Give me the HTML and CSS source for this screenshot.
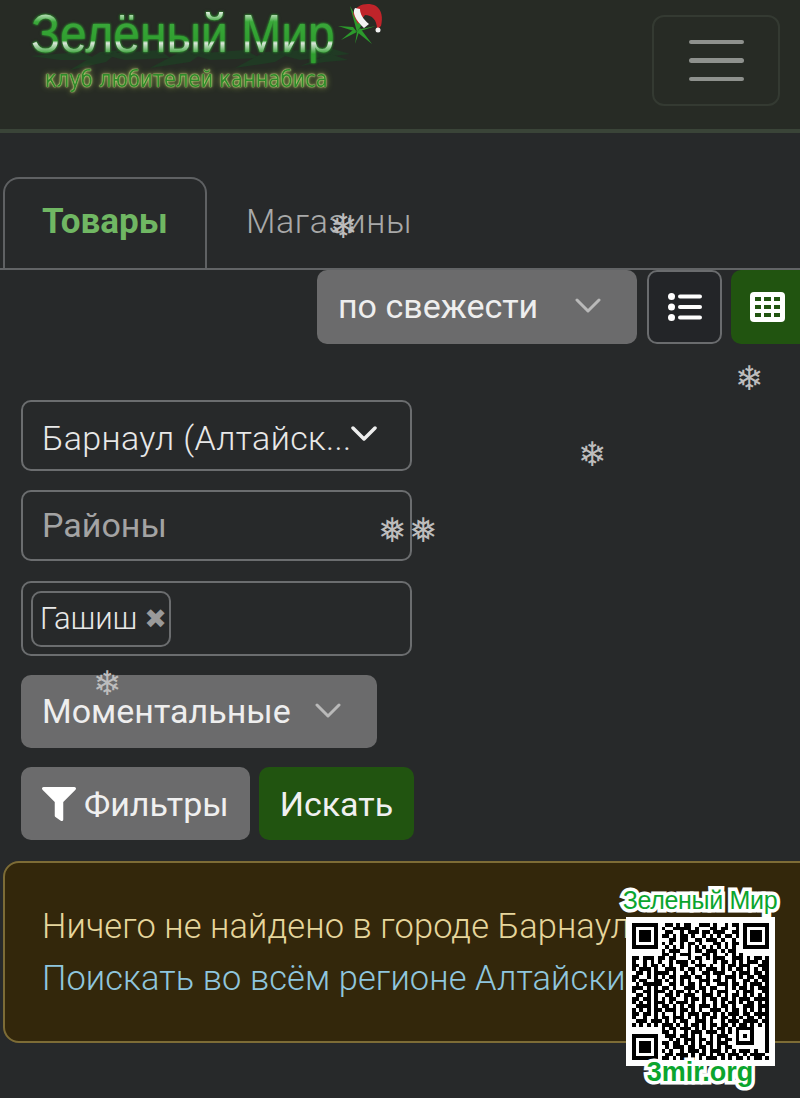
FILE: index.html
```html
<!DOCTYPE html>
<html lang="ru">
<head>
    <meta charset="UTF-8">
    <meta name="viewport" content="width=device-width, initial-scale=1.0">
    <title>Зелёный Мир</title>
    <link rel="stylesheet" href="styles.css">
</head>
<body>
    <header class="navbar">
        <a class="brand">
            <svg class="brand-foliage" viewBox="0 0 320 26">
                <g fill="#203a24">
                    <path d="M0 10 L50 6 L70 14 L30 14Z"/>
                    <path d="M40 24 L70 6 L90 4 L76 16Z"/>
                    <path d="M70 8 L130 4 L140 12 L95 14Z"/>
                    <path d="M120 22 L150 6 L180 2 L160 16Z"/>
                    <path d="M160 8 L215 4 L230 12 L180 14Z"/>
                    <path d="M205 22 L235 6 L265 4 L245 16Z"/>
                    <path d="M240 6 L300 2 L320 8 L270 14Z"/>
                    <path d="M270 20 L300 8 L318 14 L295 16Z"/>
                </g>
            </svg>
            <span class="brand-title">Зелёный Мир</span>
            <span class="brand-sub">клуб любителей каннабиса</span>
            <svg class="brand-leaf" viewBox="0 0 46 46">
                <g fill="#2c9a2c">
                    <path d="M19 30 L12 4 L23 24Z"/>
                    <path d="M19 30 L0 24 L15 25Z"/>
                    <path d="M19 30 L34 42 L22 26Z"/>
                    <path d="M19 30 L17 42 L21 30Z"/>
                    <path d="M19 30 L38 24 L23 27Z"/>
                    <path d="M19 30 L3 38 L15 28Z"/>
                </g>
                <path fill="#c0242a" d="M15 12 C18 2 30 0 38 4 C44 8 45 16 43 24 L39 27 C39 18 34 13 27 13 L20 22Z"/>
                <path fill="#f2f2f2" d="M17 6 C14 10 17 18 26 26 L31 22 C25 17 22 12 22 7Z"/>
                <circle cx="40" cy="28" r="2.5" fill="#f2f2f2"/>
            </svg>
        </a>
        <button class="navbar-toggler">
            <span></span><span></span><span></span>
        </button>
    </header>

    <ul class="tabs">
        <li class="tab active">Товары</li>
        <li class="tab">Магазины</li>
    </ul>

    <div class="sort-bar">
        <div class="select select-grey sort-select">
            <span>по свежести</span>
            <svg class="chevron" viewBox="0 0 26 16"><polyline points="2,2 13,13 24,2"/></svg>
        </div>
        <button class="view-btn">
            <svg viewBox="0 0 34 28" width="34" height="28">
                <g fill="#fff">
                    <circle cx="3.5" cy="3.5" r="3.5"/>
                    <circle cx="3.5" cy="14" r="3.5"/>
                    <circle cx="3.5" cy="24.5" r="3.5"/>
                    <rect x="10" y="1.5" width="24" height="4" rx="2"/>
                    <rect x="10" y="12" width="24" height="4" rx="2"/>
                    <rect x="10" y="22.5" width="24" height="4" rx="2"/>
                </g>
            </svg>
        </button>
        <button class="view-btn view-btn-active">
            <svg viewBox="0 0 35 30" width="35" height="30">
                <rect width="35" height="30" rx="4" fill="#fff"/>
                <g fill="#215410">
                    <rect x="5" y="5" width="6" height="4"/><rect x="14" y="5" width="7" height="4"/><rect x="24" y="5" width="6" height="4"/>
                    <rect x="5" y="13" width="6" height="4"/><rect x="14" y="13" width="7" height="4"/><rect x="24" y="13" width="6" height="4"/>
                    <rect x="5" y="21" width="6" height="4"/><rect x="14" y="21" width="7" height="4"/><rect x="24" y="21" width="6" height="4"/>
                </g>
            </svg>
        </button>
    </div>

    <form class="filters">
        <div class="field city-field">
            <span class="city-name">Барнаул (Алтайск...</span>
            <svg class="chevron chevron-light" viewBox="0 0 26 16"><polyline points="2,2 13,13 24,2"/></svg>
        </div>
        <div class="field placeholder">Районы</div>
        <div class="field tags-field">
            <span class="tag">Гашиш <b class="tag-x">✖</b></span>
        </div>
        <div class="select select-grey type-select">
            <span>Моментальные</span>
            <svg class="chevron" viewBox="0 0 26 16"><polyline points="2,2 13,13 24,2"/></svg>
        </div>
        <div class="actions">
            <button type="button" class="btn btn-grey">
                <svg viewBox="0 0 512 512" width="34" height="34"><path fill="#fff" d="M487.976 0H24.028C2.71 0-8.047 25.866 7.058 40.971L192 225.941V432c0 7.831 3.821 15.17 10.237 19.662l80 55.98C298.02 518.69 320 507.493 320 487.98V225.941l184.947-184.97C520.021 25.896 509.338 0 487.976 0z"/></svg>
                Фильтры
            </button>
            <button type="button" class="btn btn-green">Искать</button>
        </div>
    </form>

    <div class="alert">
        <div>Ничего не найдено в городе Барнаул</div>
        <a class="alert-link">Поискать во всём регионе Алтайский край</a>
    </div>

    <!-- снежинки -->
    <span class="snow" style="left:323px;top:206px">❄</span>
    <span class="snow" style="left:729px;top:358px">❄</span>
    <span class="snow" style="left:572px;top:434px">❄</span>
    <span class="snow" style="left:372px;top:510px">❅</span>
    <span class="snow" style="left:403px;top:510px">❅</span>
    <span class="snow" style="left:87px;top:663px">❄</span>

    <aside class="qr-widget">
        <div class="qr-title">Зеленый Мир</div>
        <div class="qr-box"><svg id="qr" viewBox="0 0 37 37" shape-rendering="crispEdges"></svg></div>
        <div class="qr-url">3mir.org</div>
    </aside>

    <script src="qr.js"></script>
</body>
</html>
```

FILE: styles.css
```css
html, body {
    margin: 0;
    height: 1098px;
    overflow: hidden;
}
body {
    position: relative;
    font-family: Roboto, 'Liberation Sans', sans-serif;
    font-size: 34px;
    font-weight: 300;
    color: #e8e8e8;
    background-color: #27292a;
}
button {
    font: inherit;
    color: inherit;
}

/* шапка */
.navbar {
    display: flex;
    justify-content: space-between;
    height: 129px;
    box-sizing: content-box;
    background-color: #272b25;
    border-bottom: 4px solid #3a4438;
}
.brand {
    position: relative;
    display: block;
    width: 400px;
}
.brand-foliage {
    position: absolute;
    left: 30px;
    top: 46px;
    width: 320px;
    height: 26px;
}
.brand-title {
    position: absolute;
    left: 31px;
    top: 2px;
    font-family: 'Liberation Sans', sans-serif;
    font-size: 54px;
    font-weight: 400;
    line-height: 62px;
    white-space: nowrap;
    color: transparent;
    background: linear-gradient(#e4efe4 16%, #3aa83a 32%, #2f9f2f 62%, #dfe8df 66%, #2f9f2f 84%);
    -webkit-background-clip: text;
    background-clip: text;
    filter: drop-shadow(0 0 1px #3aa83a) drop-shadow(0 0 1px #1f5a1f);
    transform: scaleX(0.89);
    transform-origin: left center;
}
.brand-sub {
    position: absolute;
    left: 45px;
    top: 66px;
    font-family: 'DejaVu Sans', sans-serif;
    font-size: 19.5px;
    font-weight: 400;
    line-height: 28px;
    white-space: nowrap;
    color: #2f8a2a;
    text-shadow: 0 0 1px #e6f09a, 0 0 2px #dbe88a, 0 0 6px #a8c050;
    transform: scaleY(1.2);
}
.brand-leaf {
    position: absolute;
    left: 338px;
    top: 2px;
    width: 46px;
    height: 46px;
}
.navbar-toggler {
    display: flex;
    flex-direction: column;
    justify-content: center;
    align-items: center;
    gap: 14px;
    width: 128px;
    height: 91px;
    margin: 15px 20px 0 0;
    padding: 0;
    background: none;
    border: 2px solid #343a32;
    border-radius: 12px;
}
.navbar-toggler span {
    display: block;
    width: 55px;
    height: 4.5px;
    border-radius: 3px;
    background-color: #8e918d;
}

/* вкладки */
.tabs {
    display: flex;
    margin: 44px 0 0;
    padding: 0 0 0 3px;
    list-style: none;
    border-bottom: 2px solid #626466;
}
.tab {
    display: flex;
    align-items: center;
    height: 91px;
    padding: 0 39px 4px;
    box-sizing: border-box;
    color: #a9a9a9;
    letter-spacing: 0.6px;
}
.tab.active {
    width: 204px;
    padding: 0 0 4px 37px;
    font-weight: 700;
    font-size: 35px;
    letter-spacing: 0;
    color: #70b763;
    border: 2px solid #5f6163;
    border-bottom: none;
    border-radius: 16px 16px 0 0;
}

/* сортировка */
.sort-bar {
    display: flex;
    gap: 10px;
    height: 74px;
    margin-left: 317px;
}
.select {
    display: flex;
    align-items: center;
    justify-content: space-between;
    box-sizing: border-box;
    height: 74px;
    padding-bottom: 2px;
    border-radius: 10px;
}
.select-grey {
    background-color: #6b6b6c;
    font-weight: 400;
    color: #eeeeee;
}
.sort-select {
    width: 320px;
    padding: 0 36px 2px 21px;
    flex-shrink: 0;
}
.type-select {
    width: 356px;
    height: 73px;
    padding: 0 36px 2px 21px;
    margin-bottom: 19px;
}
.chevron {
    width: 26px;
    height: 16px;
    fill: none;
    stroke: #b9b9b9;
    stroke-width: 3;
    stroke-linecap: round;
    stroke-linejoin: round;
    flex-shrink: 0;
}
.chevron-light {
    stroke: #eeeeee;
    stroke-width: 3.5;
    margin-top: -8px;
}
.view-btn {
    display: flex;
    align-items: center;
    justify-content: center;
    flex-shrink: 0;
    width: 75px;
    padding: 0;
    background-color: #232528;
    border: 2px solid #6a6c6e;
    border-radius: 10px;
}
.view-btn-active {
    width: 90px;
    margin-left: -1px;
    padding-right: 17px;
    background-color: #215410;
    border: none;
}

/* фильтры */
.filters {
    margin: 56px 0 0 21px;
}
.field {
    box-sizing: border-box;
    display: flex;
    align-items: center;
    width: 391px;
    height: 71px;
    margin-bottom: 19px;
    padding: 0 19px;
    border: 2px solid #6b6d6f;
    border-radius: 10px;
}
.city-field {
    justify-content: space-between;
    padding: 5px 34px 0 19px;
}
.city-name {
    white-space: nowrap;
    letter-spacing: 0.35px;
}
.placeholder {
    color: #a3a3a3;
    font-weight: 400;
    padding-bottom: 2px;
    margin-bottom: 20px;
}
.tags-field {
    height: 75px;
    padding: 0 8px;
}
.tag {
    display: flex;
    align-items: center;
    gap: 7px;
    box-sizing: border-box;
    height: 56px;
    padding: 0 0 0 7px;
    width: 140px;
    font-size: 31px;
    border: 2px solid #6b6d6f;
    border-radius: 10px;
}
.tag-x {
    font-family: 'DejaVu Sans', sans-serif;
    font-size: 27px;
    line-height: 1;
    color: #9a9a9a;
}
.actions {
    display: flex;
    gap: 9px;
}
.btn {
    display: flex;
    align-items: center;
    gap: 8px;
    height: 73px;
    border: none;
    border-radius: 10px;
    font-weight: 400;
    padding: 0 21px;
}
.btn-grey {
    background-color: #6b6b6c;
    color: #f0f0f0;
}
.btn-green {
    background-color: #215410;
    color: #f0f0f0;
}

/* сообщение */
.alert {
    box-sizing: border-box;
    width: 900px;
    height: 182px;
    margin: 21px 0 0 3px;
    padding: 37px 37px;
    font-size: 34.4px;
    letter-spacing: 0.1px;
    line-height: 52px;
    white-space: nowrap;
    color: #e6d69c;
    background-color: #33270b;
    border: 2px solid #7d6c36;
    border-radius: 16px;
}
.alert-link {
    color: #8fc6de;
}

.snow {
    position: absolute;
    width: 40px;
    text-align: center;
    font-family: 'DejaVu Sans', sans-serif;
    font-size: 34px;
    line-height: 40px;
    color: #bdbdbd;
}

/* QR поверх страницы */
.qr-widget {
    position: absolute;
    left: 622px;
    top: 884px;
    width: 156px;
    text-align: center;
    font-family: 'Liberation Sans', sans-serif;
    font-weight: 400;
}
.qr-title, .qr-url {
    position: relative;
    z-index: 1;
    white-space: nowrap;
    color: #0ba52e;
    -webkit-text-stroke: 7px #ffffff;
    paint-order: stroke fill;
}
.qr-title {
    font-size: 25px;
    letter-spacing: -0.3px;
    line-height: 33px;
}
.qr-box {
    box-sizing: border-box;
    width: 149px;
    height: 149px;
    margin-left: 4px;
    padding: 6px;
    background-color: #fff;
}
.qr-box svg {
    display: block;
    width: 137px;
    height: 137px;
}
.qr-url {
    margin-top: -10px;
    font-size: 27px;
    font-weight: 700;
    line-height: 32px;
}
```

FILE: qr.js
```js
// строки QR-кода, # - чёрный модуль
const rows = [
    '.......#.##.#.##..###.#..#.##.#.......',
    '.......##..#####.#...##.##..#.#.......',
    '.......#.##..#.###.##.###..##..',
    '.......###.#.##.#..#.#.#.##.##.',
    '.......#..##.##..##.###.#..#.#.',
    '.......##.#..#.##.#...##.#.###.',
    '.......#.#.#.#.#.#.#.#.#.#.#.#.',
    '........#.###..#.##.###.#.##...',
    '........##.#.###...##.#..#.#.#.',
    '##.###.##.##...#.##.#.###..###.#.##.#',
    '#..#.#.#..#.###.#.#...#.##.#.#.###.##',
    '##.#.##.#.#..##..###.#..#.##.###..###',
    '#.###.#..###.#.##.#.###.#.#.##.#.#.##',
    '.##.#.####.#..#.#..##.###..#.###.##.#',
    '##..#.#.#.##.###.##.#..#.###.#.##.###',
    '#.##..##.#.#.#.#..###.##.#.#..##.#.##',
    '.#.#####..##.#.##.#.#..###.##.#.###.#',
    '###.#.#.##.#..###.##.##..#.#.##.#.###',
    '#..##.###.#.##.#.#.#.#.###..#.###..##',
    '.##.#.#..##.#.###..###.#.#.##.#.#.#.#',
    '##.##.#.#.##..#.##.#.##.##.#.###.####',
    '#.#.#.###.#.###.#..#..#.#.##.#.##.#.#',
    '.####.#.##.#.#.##.###.#.##.#..###.###',
    '#.#.#.##.###.##.#.#..###.#.##.#.#.#.#',
    '##.##.#.#..#.#.###.##.#.#.###.##.####',
    '#..#..#.##.###.#.#.#.##.##.#.#.##.#.#',
    '.###.###.#.#.##..###.#..#.###.####.##',
    '#.#.#.#.###.#.#.##.#.##.##.#.##.#.#.#',
    '........#.##.###.#.#.#.##.#.........#',
    '........##.#..#.###.###.#.#.........#',
    '.......#.###.##.#.#..#.###..........#',
    '.......#..#.#.###.##.#.#.##.........#',
    '.......###.##.#.#.#.##.###..........#',
    '.......#.#.###.##.##.#.#.##.........#',
    '.......##.#..#.###.#.###.#.#.###.#..#',
    '.......#.##.###.#.##.#.##.###.#.####.',
    '.......###.#.##.#.#.###.#.#.##.#.##.#'
];

const size = 37;
const grid = rows.map(r => r.padEnd(size, '.').slice(0, size).split('').map(c => c === '#'));

// поисковые узоры и выравнивающий квадрат
function stamp(x0, y0, n) {
    for (let y = -1; y <= n; y++) {
        for (let x = -1; x <= n; x++) {
            const cx = x0 + x, cy = y0 + y;
            if (cx < 0 || cy < 0 || cx >= size || cy >= size) continue;
            const d = Math.max(Math.abs(2 * x - n + 1), Math.abs(2 * y - n + 1)) / 2;
            grid[cy][cx] = d === 3 || d <= 1;
        }
    }
}
stamp(0, 0, 7);
stamp(30, 0, 7);
stamp(0, 30, 7);
for (let y = 28; y <= 32; y++) {
    for (let x = 28; x <= 32; x++) {
        const d = Math.max(Math.abs(x - 30), Math.abs(y - 30));
        grid[y][x] = d === 2 || d === 0;
    }
}

let d = '';
grid.forEach((row, y) => {
    row.forEach((on, x) => {
        if (on) d += `M${x} ${y}h1v1h-1z`;
    });
});
const path = document.createElementNS('http://www.w3.org/2000/svg', 'path');
path.setAttribute('d', d);
document.getElementById('qr').appendChild(path);
```
